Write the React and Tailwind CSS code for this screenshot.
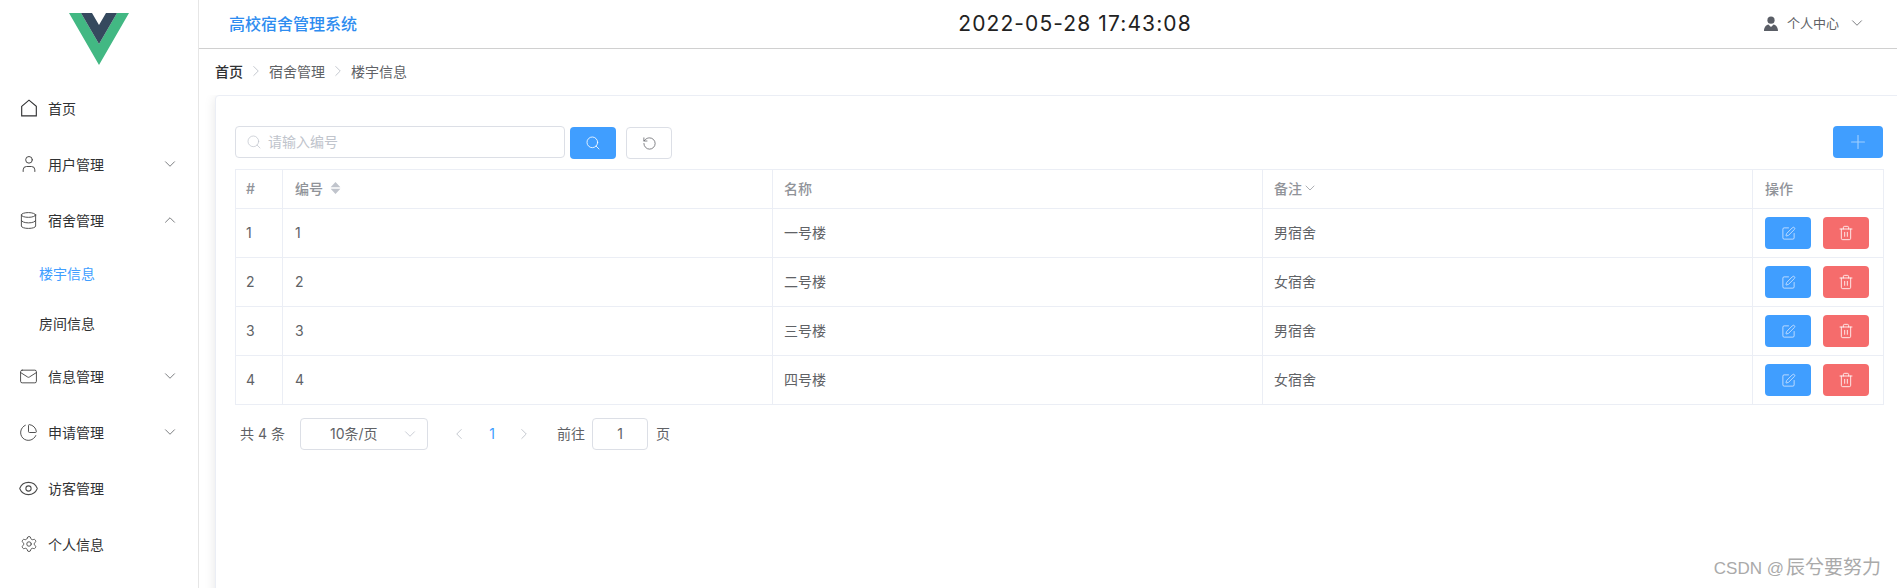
import React from 'react';
import {
  User, Database, Mail, ChartPie, Eye, Settings, ChevronDown, ChevronUp,
  ChevronLeft, ChevronRight, Search, RotateCw, Plus, SquarePen, Trash2,
} from 'lucide-react';

const HouseIcon = () => (
  <svg viewBox="0 0 16 16" className="w-[18px] h-[18px] shrink-0" fill="none" stroke="currentColor" strokeWidth="1">
    <path d="M1.5 6.5 8 1l6.5 5.5v8.5h-13z" />
  </svg>
);

const MenuItem = ({ icon, label, arrow }) => (
  <div className="h-[56px] flex items-center pl-[21px] pr-[19px] pb-[2px] text-[#303133]">
    <span className="w-[15px] flex justify-center">{icon}</span>
    <span className="ml-[12px] flex-1">{label}</span>
    {arrow === 'down' && <ChevronDown className="w-[18px] h-[18px] text-[#606266]" strokeWidth={1.1} />}
    {arrow === 'up' && <ChevronUp className="w-[18px] h-[18px] text-[#606266]" strokeWidth={1.1} />}
  </div>
);

const SubItem = ({ label, active }) => (
  <div className={`h-[50px] flex items-center pl-[39px] pb-[2px] ${active ? 'text-[#409eff]' : 'text-[#303133]'}`}>{label}</div>
);

const iconCls = 'shrink-0 text-[#4a4a4a]';

const Sidebar = () => (
  <aside className="w-[199px] shrink-0 h-full border-r border-[#e6e6e6] bg-white">
    <div className="h-[81px] flex justify-center pt-[13px]">
      <svg viewBox="0 0 60 52" className="w-[60px] h-[52px]">
        <path d="M0 0h12l18 31L48 0h12L30 52z" fill="#42b883" />
        <path d="M12 0h11l7 12 7-12h11L30 31z" fill="#35495e" />
      </svg>
    </div>
    <MenuItem icon={<HouseIcon />} label="首页" />
    <MenuItem icon={<User className={`${iconCls} w-[20px] h-[20px]`} strokeWidth={1.2} />} label="用户管理" arrow="down" />
    <MenuItem icon={<Database className={`${iconCls} w-[19px] h-[19px]`} strokeWidth={1.2} />} label="宿舍管理" arrow="up" />
    <SubItem label="楼宇信息" active />
    <SubItem label="房间信息" />
    <MenuItem icon={<Mail className={`${iconCls} w-[19px] h-[19px]`} strokeWidth={1.2} />} label="信息管理" arrow="down" />
    <MenuItem icon={<ChartPie className={`${iconCls} w-[19px] h-[19px]`} strokeWidth={1.2} />} label="申请管理" arrow="down" />
    <MenuItem icon={<Eye className={`${iconCls} w-[21px] h-[21px]`} strokeWidth={1.2} />} label="访客管理" />
    <MenuItem icon={<Settings className={`${iconCls} w-[18px] h-[18px]`} strokeWidth={1.2} />} label="个人信息" />
  </aside>
);

const Header = () => (
  <header className="h-[49px] shrink-0 border-b border-[#d0d0d0] flex items-center bg-white">
    <div className="w-[30px]" />
    <div className="w-[669px] text-[16px] text-[#2d8cf0] font-medium">高校宿舍管理系统</div>
    <div className="w-[354px] text-center text-[21px] tracking-[1.1px] text-[#222]">2022-05-28 17:43:08</div>
    <div className="ml-[511px] flex items-center text-[#606266] text-[13px]">
      <svg viewBox="0 0 16 16" className="w-[16px] h-[16px]" fill="#5a5e66">
        <circle cx="8" cy="4.2" r="3.6" />
        <path d="M1 15c0-3.6 2-6 4.4-6.4L8 11l2.6-2.4C13 9 15 11.4 15 15z" />
      </svg>
      <span className="ml-[8px]">个人中心</span>
      <ChevronDown className="ml-[9px] w-[18px] h-[18px] -mt-[3px]" strokeWidth={1.1} />
    </div>
  </header>
);

const Breadcrumb = () => {
  const sep = <ChevronRight className="w-[18px] h-[18px] mx-[4px] text-[#c0c4cc]" strokeWidth={1.25} />;
  return (
    <div className="h-[46px] shrink-0 flex items-center pl-[16px] pb-[2px] text-[#606266]">
      <span className="text-[#303133] font-medium">首页</span>
      {sep}
      <span>宿舍管理</span>
      {sep}
      <span>楼宇信息</span>
    </div>
  );
};

const rows = [
  { id: 1, name: '一号楼', note: '男宿舍' },
  { id: 2, name: '二号楼', note: '女宿舍' },
  { id: 3, name: '三号楼', note: '男宿舍' },
  { id: 4, name: '四号楼', note: '女宿舍' },
];

const thCls = 'border border-[#ebeef5] h-[39px] pb-[2px] text-left font-medium text-[#909399]';
const tdCls = 'border border-[#ebeef5] h-[49px] text-[#606266]';

const BuildingTable = () => (
  <table className="table-fixed border-collapse w-[1648px]">
    <colgroup>
      <col className="w-[47px]" />
      <col className="w-[490px]" />
      <col className="w-[490px]" />
      <col className="w-[490px]" />
      <col className="w-[131px]" />
    </colgroup>
    <thead>
      <tr>
        <th className={`${thCls} pl-[10px]`}>#</th>
        <th className={`${thCls} pl-[12px]`}>
          <span className="flex items-center">
            编号
            <svg viewBox="0 0 10 11" className="ml-[7px] w-[11px] h-[12px]" fill="#c0c4cc">
              <path d="M5 0l4.5 4.7h-9zM5 11L.5 6.3h9z" />
            </svg>
          </span>
        </th>
        <th className={`${thCls} pl-[11px]`}>名称</th>
        <th className={`${thCls} pl-[11px]`}>
          <span className="flex items-center">
            备注
            <ChevronDown className="w-[16px] h-[16px]" strokeWidth={1.1} />
          </span>
        </th>
        <th className={`${thCls} pl-[12px]`}>操作</th>
      </tr>
    </thead>
    <tbody>
      {rows.map((r) => (
        <tr key={r.id}>
          <td className={`${tdCls} pl-[10px] pb-[2px]`}>{r.id}</td>
          <td className={`${tdCls} pl-[12px] pb-[2px]`}>{r.id}</td>
          <td className={`${tdCls} pl-[11px] pb-[2px]`}>{r.name}</td>
          <td className={`${tdCls} pl-[11px] pb-[2px]`}>{r.note}</td>
          <td className={`${tdCls} pl-[12px]`}>
            <div className="flex gap-[12px]">
              <button className="w-[46px] h-[32px] rounded-[4px] bg-[#409eff] text-[#dcebff] flex items-center justify-center">
                <SquarePen className="w-[15px] h-[15px]" strokeWidth={1.25} />
              </button>
              <button className="w-[46px] h-[32px] rounded-[4px] bg-[#f56c6c] text-white flex items-center justify-center">
                <Trash2 className="w-[16px] h-[16px]" strokeWidth={1.25} />
              </button>
            </div>
          </td>
        </tr>
      ))}
    </tbody>
  </table>
);

const Toolbar = () => (
  <div className="h-[32px] w-[1648px] flex items-start mb-[11px]">
    <div className="w-[330px] h-[32px] border border-[#dcdfe6] rounded-[4px] flex items-center pl-[10px] pb-[1px] text-[#c0c4cc]">
      <Search className="w-[16px] h-[16px]" strokeWidth={1.1} />
      <span className="ml-[6px] pb-[1px]">请输入编号</span>
    </div>
    <button className="ml-[5px] mt-[1px] w-[46px] h-[32px] rounded-[4px] bg-[#409eff] text-white flex items-center justify-center">
      <Search className="w-[16px] h-[16px]" strokeWidth={1.25} />
    </button>
    <button className="ml-[10px] mt-[1px] w-[46px] h-[32px] rounded-[4px] border border-[#dcdfe6] text-[#606266] flex items-center justify-center">
      <RotateCw className="w-[15px] h-[15px] -scale-x-100" strokeWidth={1.25} />
    </button>
    <button className="ml-auto w-[50px] h-[32px] rounded-[4px] bg-[#409eff] text-[#a0cfff] flex items-center justify-center">
      <Plus className="w-[22px] h-[22px]" strokeWidth={1.25} />
    </button>
  </div>
);

const Pagination = () => (
  <div className="mt-[13px] h-[32px] flex items-center text-[#606266] pl-[5px]">
    <span className="w-[60px] pb-[2px]">共 4 条</span>
    <div className="w-[128px] h-[32px] border border-[#dcdfe6] rounded-[4px] flex items-center pl-[29px] pr-[8px]">
      <span className="flex-1 pb-[2px]">10条/页</span>
      <ChevronDown className="w-[18px] h-[18px] text-[#c0c4cc]" strokeWidth={1.1} />
    </div>
    <ChevronLeft className="ml-[22px] w-[18px] h-[18px] text-[#c0c4cc]" strokeWidth={1.25} />
    <span className="ml-[17px] w-[14px] text-center text-[#409eff] pb-[2px]">1</span>
    <ChevronRight className="ml-[16px] w-[18px] h-[18px] text-[#c0c4cc]" strokeWidth={1.25} />
    <span className="ml-[24px] pb-[2px]">前往</span>
    <div className="ml-[7px] w-[56px] h-[32px] border border-[#dcdfe6] rounded-[4px] flex items-center justify-center pb-[2px]">1</div>
    <span className="ml-[8px] pb-[2px]">页</span>
  </div>
);

export default function App() {
  return (
    <div className="relative w-[1897px] h-[588px] overflow-hidden flex bg-white text-[14px] font-['Inter','Noto_Sans_CJK_SC',sans-serif]">
      <Sidebar />
      <div className="flex-1 min-w-0 flex flex-col">
        <Header />
        <Breadcrumb />
        <main className="pl-[16px] flex-1 overflow-hidden">
          <div className="w-[1800px] h-[600px] border border-[#ebeef5] rounded-[4px] bg-white shadow-[0_2px_12px_rgba(0,0,0,0.1)] pt-[30px] pl-[19px]">
            <Toolbar />
            <BuildingTable />
            <Pagination />
          </div>
        </main>
      </div>
      {/* watermark */}
      <div className="absolute right-[16px] bottom-[6px] flex items-baseline text-[#aaaaaa] font-['Liberation_Sans','Noto_Sans_CJK_SC',sans-serif]">
        <span className="text-[17px] mr-[2px]">CSDN @</span>
        <span className="text-[19px]">辰兮要努力</span>
      </div>
    </div>
  );
}
